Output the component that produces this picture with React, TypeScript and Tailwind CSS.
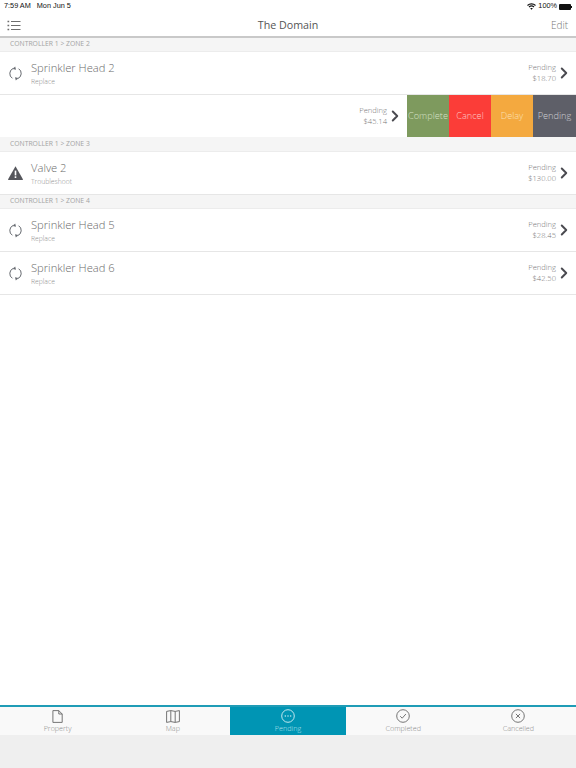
import { ChevronRight } from "lucide-react";

const openSans = "font-['Open_Sans',sans-serif]";

function MenuIcon() {
  return (
    <svg width="14" height="11" viewBox="0 0 14 11" fill="none" stroke="#6d6d6d" strokeWidth="1.2">
      <path d="M4 1.5H13.5M4 5.5H13.5M4 9.5H13.5" />
      <path d="M.5 1.5H2.2M.5 5.5H2.2M.5 9.5H2.2" strokeWidth="1.6" />
    </svg>
  );
}

function RepeatIcon() {
  return (
    <svg width="15" height="15" viewBox="0 0 15 15" fill="none" stroke="#666a70" strokeWidth="1" className="shrink-0">
      <path d="M5.2 2.4A5.6 5.6 0 0 0 4.4 12.3" />
      <path d="M9.8 12.6A5.6 5.6 0 0 0 10.6 2.7" />
      <path d="M7.2 0.4 8 3.8 4.6 3Z" fill="#666a70" stroke="none" />
      <path d="M7.8 14.6 7 11.2 10.4 12Z" fill="#666a70" stroke="none" />
    </svg>
  );
}

function WarningIcon() {
  return (
    <svg width="15" height="14" viewBox="0 0 15 14" className="shrink-0">
      <path d="M7.5 .3 14.9 13.2a.5.5 0 0 1-.4.7H.5a.5.5 0 0 1-.4-.7Z" fill="#55565c" />
      <rect x="6.7" y="4.6" width="1.6" height="4.8" fill="#fff" />
      <rect x="6.7" y="10.3" width="1.6" height="1.7" fill="#fff" />
    </svg>
  );
}

function SectionHeader({ label, tall }: { label: string; tall?: boolean }) {
  return (
    <div
      className={`${tall ? "h-[15px]" : "h-[14px]"} bg-[#f5f5f5] border-b border-[#ececec] pl-[10px] flex items-center text-[6.8px] leading-none text-[#a3a3a3]`}
    >
      {label}
    </div>
  );
}

function Meta({ amount }: { amount: string }) {
  return (
    <div className="flex items-center">
      <div className="text-right text-[7.6px] leading-[10px] font-light text-[#777] mb-[2px]">
        <div className="mb-[1px]">Pending</div>
        <div>{amount}</div>
      </div>
      <ChevronRight size={18} strokeWidth={2.6} color="#4a4a50" className="ml-[-1px] mr-[3px]" />
    </div>
  );
}

function Row({ title, sub, amount, warn }: { title: string; sub: string; amount: string; warn?: boolean }) {
  return (
    <div className="h-[43px] border-b border-[#e6e6e6] flex items-center justify-between bg-white">
      <div className="flex items-center">
        <div className="w-[31px] pl-[8px]">{warn ? <WarningIcon /> : <RepeatIcon />}</div>
        <div>
          <div className="text-[11.2px] leading-[16px] font-light text-[#6b6b6b]">{title}</div>
          <div className="text-[6.8px] leading-[11px] font-light text-[#8f8f8f]">{sub}</div>
        </div>
      </div>
      <Meta amount={amount} />
    </div>
  );
}

function SwipeRow() {
  const actions = [
    { label: "Complete", cls: "bg-[#7e9a5e] text-[#d5e0c6]" },
    { label: "Cancel", cls: "bg-[#fb3d38] text-[#fcc9c6]" },
    { label: "Delay", cls: "bg-[#f4a93f] text-[#fbe0b4]" },
    { label: "Pending", cls: "bg-[#5e5f68] text-[#d0d0d4]" },
  ];
  return (
    <div className="h-[42px] flex bg-white">
      <div className="flex-1 flex items-center justify-end">
        <Meta amount="$45.14" />
      </div>
      {actions.map((a) => (
        <div key={a.label} className={`w-[42px] last:w-[43px] flex items-center justify-center text-[9.2px] font-light ${a.cls}`}>
          {a.label}
        </div>
      ))}
    </div>
  );
}

function CircleIcon({ children, color }: { children: React.ReactNode; color: string }) {
  return (
    <svg width="14" height="14" viewBox="0 0 14 14" fill="none" stroke={color} strokeWidth="0.9">
      <circle cx="7" cy="7" r="6.3" />
      {children}
    </svg>
  );
}

function Tab({ label, icon, active }: { label: string; icon: React.ReactNode; active?: boolean }) {
  return (
    <div className={`flex-1 flex flex-col items-center pt-[2px] ${active ? "bg-[#0095b4]" : ""}`}>
      <div className="h-[14px] flex items-center justify-center">{icon}</div>
      <div className={`text-[7.2px] leading-[10px] font-light ${active ? "text-[#b5e2ec]" : "text-[#8a8a8a]"}`}>{label}</div>
    </div>
  );
}

export default function App() {
  return (
    <div className={`w-[576px] h-[768px] bg-white flex flex-col overflow-hidden ${openSans}`}>
      <div className="h-[12px] pt-[1px] px-[4px] flex items-center justify-between text-[7.3px] font-['Liberation_Sans',sans-serif] text-[#111] bg-white">
        <div>
          <span>7:59 AM</span>
          <span className="ml-[6px]">Mon Jun 5</span>
        </div>
        <div className="flex items-center">
          <svg width="9" height="7" viewBox="0 0 18 14" fill="none" stroke="#111" strokeWidth="2.2" className="mr-[1px]">
            <path d="M1 5C5.500 .6 12.500 .6 17 5" />
            <path d="M4 8C7 5.200 11 5.200 14 8" />
            <path d="M9 13.500 6.500 10.800C8 9.600 10 9.600 11.500 10.800Z" fill="#111" stroke="none" />
          </svg>
          <span className="ml-[1px]">100%</span>
          <span className="ml-[2px] w-[12px] h-[6px] bg-[#111] rounded-[1px]" />
          <span className="w-[1px] h-[2px] bg-[#111]" />
        </div>
      </div>
      <div className="h-[26px] pt-[2px] flex items-center justify-between pl-[7px] pr-[8px] border-b-2 border-[#c9c9c9] relative">
        <MenuIcon />
        <div className="absolute inset-x-0 text-center text-[10.7px] text-[#555] pointer-events-none">The Domain</div>
        <div className="text-[10px] font-light text-[#777]">Edit</div>
      </div>

      <SectionHeader label="CONTROLLER 1 > ZONE 2" />
      <Row title="Sprinkler Head 2" sub="Replace" amount="$18.70" />
      <SwipeRow />
      <SectionHeader label="CONTROLLER 1 > ZONE 3" tall />
      <Row title="Valve 2" sub="Troubleshoot" amount="$130.00" warn />
      <SectionHeader label="CONTROLLER 1 > ZONE 4" />
      <Row title="Sprinkler Head 5" sub="Replace" amount="$28.45" />
      <Row title="Sprinkler Head 6" sub="Replace" amount="$42.50" />

      <div className="flex-1" />

      <div className="h-[30px] border-t-2 border-[#1f9cb6] flex bg-[#f9f9f9]">
        <Tab
          label="Property"
          icon={
            <svg width="11" height="13" viewBox="0 0 11 13" fill="none" stroke="#666" strokeWidth="0.9">
              <path d="M.9.6H6.800L10.200 4V12.400H.9Z" />
              <path d="M6.800.6V4H10.200" />
            </svg>
          }
        />
        <Tab
          label="Map"
          icon={
            <svg width="14" height="13" viewBox="0 0 14 13" fill="none" stroke="#666" strokeWidth="0.9">
              <path d="M.6 1.400 4.800.6 9.200 1.400 13.400.6V11.600L9.200 12.400 4.800 11.600.6 12.400Z" />
              <path d="M4.800.6V11.600M9.200 1.400V12.400" />
            </svg>
          }
        />
        <Tab
          label="Pending"
          active
          icon={
            <CircleIcon color="#d8f0f5">
              <circle cx="4.3" cy="7" r="0.7" fill="#d8f0f5" stroke="none" />
              <circle cx="7" cy="7" r="0.7" fill="#d8f0f5" stroke="none" />
              <circle cx="9.7" cy="7" r="0.7" fill="#d8f0f5" stroke="none" />
            </CircleIcon>
          }
        />
        <Tab
          label="Completed"
          icon={
            <CircleIcon color="#666">
              <path d="M4.2 7.2 6.2 9.2 9.9 5" />
            </CircleIcon>
          }
        />
        <Tab
          label="Cancelled"
          icon={
            <CircleIcon color="#666">
              <path d="M4.900 4.900 9.100 9.100M9.100 4.900 4.900 9.100" />
            </CircleIcon>
          }
        />
      </div>
      <div className="h-[33px] bg-[#efefef]" />
    </div>
  );
}
